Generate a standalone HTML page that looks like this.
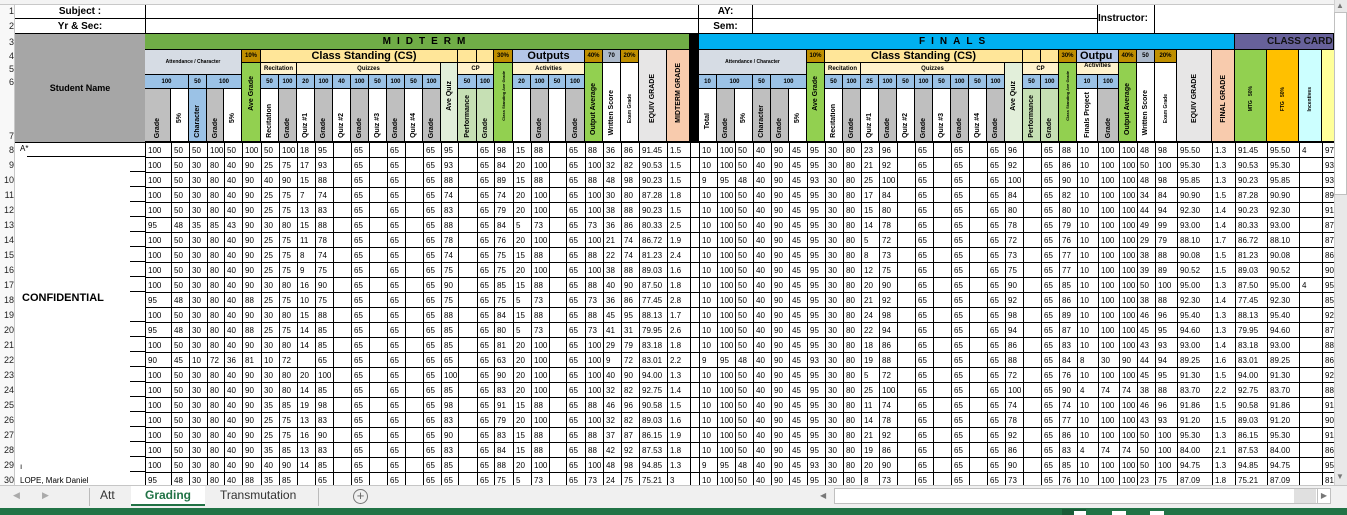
<!DOCTYPE html>
<html><head><meta charset="utf-8">
<style>
*{margin:0;padding:0;box-sizing:border-box}
body{width:1347px;height:515px;overflow:hidden;background:#fff;font-family:"Liberation Sans",Arial,sans-serif;position:relative;color:#000}
.a{position:absolute}
.h{position:absolute;border-right:1px solid #000;border-bottom:1px solid #000;display:flex;align-items:center;justify-content:center;font-weight:bold;font-size:6px;overflow:hidden;white-space:nowrap}
.h7{flex-direction:column;justify-content:flex-end;padding-bottom:3px}
.v{writing-mode:vertical-rl;transform:rotate(180deg);font-size:7px;font-weight:bold;white-space:nowrap}
.rn{position:absolute;left:0;width:14px;font-size:9px;text-align:right;color:#222;overflow:hidden}
#dt{position:absolute;left:145px;top:142px;width:1189px;height:343px;overflow:hidden}
table{border-collapse:collapse;table-layout:fixed;width:1200px}
td{border:1px solid #000;height:15px;padding:0 0 0 2px;font-size:8px;line-height:13px;white-space:nowrap;overflow:hidden}
</style></head><body>
<!-- column header strip -->
<div class="a" style="left:0;top:0;width:1334px;height:5px;background:#f3f3f3;border-bottom:1px solid #c8c8c8"></div>
<!-- row header -->
<div class="a" style="left:0;top:5px;width:15px;height:480px;background:#f8f8f8;border-right:1px solid #c8c8c8"></div>
<div class="rn" style="top:6px">1</div><div class="rn" style="top:21px">2</div><div class="rn" style="top:37px">3</div><div class="rn" style="top:51px">4</div><div class="rn" style="top:64px">5</div><div class="rn" style="top:77px">6</div><div class="rn" style="top:131px">7</div>
<div class="rn" style="top:145px">8</div><div class="rn" style="top:160px">9</div><div class="rn" style="top:175px">10</div><div class="rn" style="top:190px">11</div><div class="rn" style="top:205px">12</div><div class="rn" style="top:220px">13</div><div class="rn" style="top:235px">14</div><div class="rn" style="top:250px">15</div><div class="rn" style="top:265px">16</div><div class="rn" style="top:280px">17</div><div class="rn" style="top:295px">18</div><div class="rn" style="top:310px">19</div><div class="rn" style="top:325px">20</div><div class="rn" style="top:340px">21</div><div class="rn" style="top:355px">22</div><div class="rn" style="top:370px">23</div><div class="rn" style="top:385px">24</div><div class="rn" style="top:400px">25</div><div class="rn" style="top:415px">26</div><div class="rn" style="top:430px">27</div><div class="rn" style="top:445px">28</div><div class="rn" style="top:460px">29</div><div class="rn" style="top:475px">30</div>

<!-- rows 1-2 -->
<div class="a" style="left:15px;top:5px;width:130px;height:14px;font-size:10px;font-weight:bold;text-align:center;line-height:14px">Subject :</div>
<div class="a" style="left:15px;top:19px;width:130px;height:15px;font-size:10px;font-weight:bold;text-align:center;line-height:15px">Yr &amp; Sec:</div>
<div class="a" style="left:15px;top:18px;width:1083px;height:1px;background:#000"></div>
<div class="a" style="left:15px;top:33px;width:1319px;height:2px;background:#000"></div>
<div class="a" style="left:145px;top:5px;width:1px;height:29px;background:#000"></div>
<div class="a" style="left:698px;top:5px;width:1px;height:29px;background:#000"></div>
<div class="a" style="left:752px;top:5px;width:1px;height:29px;background:#000"></div>
<div class="a" style="left:1097px;top:5px;width:1px;height:29px;background:#000"></div>
<div class="a" style="left:1154px;top:5px;width:1px;height:29px;background:#000"></div>
<div class="a" style="left:699px;top:5px;width:53px;height:14px;font-size:10px;font-weight:bold;text-align:center;line-height:14px">AY:</div>
<div class="a" style="left:699px;top:19px;width:53px;height:15px;font-size:10px;font-weight:bold;text-align:center;line-height:15px">Sem:</div>
<div class="a" style="left:1098px;top:5px;width:60px;height:29px;font-size:10px;font-weight:bold;line-height:28px">Instructor:</div>

<!-- student name block -->
<div class="h" style="left:15px;top:34px;width:131px;height:109px;background:#a6a6a6;font-size:9px;border-left:0">Student Name</div>

<!-- row 3 bands -->
<div class="h" style="left:145px;top:34px;width:545px;height:16px;background:#70ad47;font-size:10px;letter-spacing:6px;justify-content:center;padding-left:20px">MIDTERM</div>
<div class="a" style="left:690px;top:34px;width:9px;height:108px;background:#000"></div>
<div class="h" style="left:699px;top:34px;width:536px;height:16px;background:#00b0f0;font-size:10px;letter-spacing:6px;justify-content:flex-start;padding-left:220px">FINALS</div>
<div class="h" style="left:1235px;top:34px;width:99px;height:16px;background:#67619a;font-size:10px;justify-content:flex-start;padding-left:32px;color:#111">CLASS CARD</div>

<!-- MIDTERM rows 4-5 -->
<div class="h" style="left:145px;top:50px;width:97px;height:25px;background:#d6dce4;font-size:5px">Attendance / Character</div>
<div class="h" style="left:242px;top:50px;width:19px;height:13px;background:#bf8f00">10%</div>
<div class="h" style="left:242px;top:63px;width:19px;height:79px;background:#92d050;flex-direction:column;justify-content:flex-end;padding-bottom:30px"><span class="v">Ave Grade</span></div>
<div class="h" style="left:261px;top:50px;width:197px;height:13px;background:#ffe699;font-size:11px;padding-left:10px">Class Standing (CS)</div>
<div class="h" style="left:458px;top:50px;width:19px;height:13px;background:#ffe699"></div>
<div class="h" style="left:477px;top:50px;width:17px;height:13px;background:#ffe699"></div>
<div class="h" style="left:494px;top:50px;width:19px;height:13px;background:#bf8f00">30%</div>
<div class="h" style="left:513px;top:50px;width:72px;height:13px;background:#b4c6e7;font-size:11px">Outputs</div>
<div class="h" style="left:585px;top:50px;width:18px;height:13px;background:#bf8f00">40%</div>
<div class="h" style="left:603px;top:50px;width:18px;height:13px;background:#acb9ca">70</div>
<div class="h" style="left:621px;top:50px;width:18px;height:13px;background:#bf8f00">20%</div>
<div class="h" style="left:639px;top:50px;width:28px;height:92px;background:#e7e6e6;flex-direction:column;justify-content:flex-end;padding-bottom:18px"><span class="v">EQUIV GRADE</span></div>
<div class="h" style="left:667px;top:50px;width:23px;height:92px;background:#f8cbad;flex-direction:column;justify-content:flex-end;padding-bottom:18px"><span class="v">MIDTERM GRADE</span></div>
<div class="h" style="left:261px;top:63px;width:36px;height:12px;background:#fff2cc">Recitation</div>
<div class="h" style="left:297px;top:63px;width:144px;height:12px;background:#fff2cc">Quizzes</div>
<div class="h" style="left:441px;top:63px;width:17px;height:79px;background:#e2efda;flex-direction:column;justify-content:flex-end;padding-bottom:30px"><span class="v">Ave Quiz</span></div>
<div class="h" style="left:458px;top:63px;width:36px;height:12px;background:#fff2cc">CP</div>
<div class="h" style="left:494px;top:63px;width:19px;height:79px;background:#92d050;flex-direction:column;justify-content:flex-end;padding-bottom:20px"><span class="v" style="font-size:4px">Class Standing Ave Grade</span></div>
<div class="h" style="left:513px;top:63px;width:72px;height:12px;background:#fff2cc">Activities</div>
<div class="h" style="left:585px;top:63px;width:18px;height:79px;background:#92d050;flex-direction:column;justify-content:flex-end;padding-bottom:6px"><span class="v">Output Average</span></div>
<div class="h" style="left:603px;top:63px;width:18px;height:79px;background:#fff;flex-direction:column;justify-content:flex-end;padding-bottom:6px"><span class="v">Written Score</span></div>
<div class="h" style="left:621px;top:63px;width:18px;height:79px;background:#fff;flex-direction:column;justify-content:flex-end;padding-bottom:18px"><span class="v" style="font-size:5px">Exam Grade</span></div>

<!-- MIDTERM row 6 -->
<div class="h" style="left:145px;top:75px;width:44px;height:14px;background:#9bc2e6">100</div>
<div class="h" style="left:189px;top:75px;width:18px;height:14px;background:#9bc2e6">50</div>
<div class="h" style="left:207px;top:75px;width:35px;height:14px;background:#9bc2e6">100</div>
<div class="h" style="left:261px;top:75px;width:18px;height:14px;background:#9bc2e6">50</div>
<div class="h" style="left:279px;top:75px;width:18px;height:14px;background:#9bc2e6">100</div>
<div class="h" style="left:297px;top:75px;width:18px;height:14px;background:#9bc2e6">20</div>
<div class="h" style="left:315px;top:75px;width:18px;height:14px;background:#9bc2e6">100</div>
<div class="h" style="left:333px;top:75px;width:18px;height:14px;background:#9bc2e6">40</div>
<div class="h" style="left:351px;top:75px;width:18px;height:14px;background:#9bc2e6">100</div>
<div class="h" style="left:369px;top:75px;width:18px;height:14px;background:#9bc2e6">50</div>
<div class="h" style="left:387px;top:75px;width:18px;height:14px;background:#9bc2e6">100</div>
<div class="h" style="left:405px;top:75px;width:18px;height:14px;background:#9bc2e6">50</div>
<div class="h" style="left:423px;top:75px;width:18px;height:14px;background:#9bc2e6">100</div>
<div class="h" style="left:458px;top:75px;width:19px;height:14px;background:#9bc2e6">50</div>
<div class="h" style="left:477px;top:75px;width:17px;height:14px;background:#9bc2e6">100</div>
<div class="h" style="left:513px;top:75px;width:18px;height:14px;background:#9bc2e6">20</div>
<div class="h" style="left:531px;top:75px;width:18px;height:14px;background:#9bc2e6">100</div>
<div class="h" style="left:549px;top:75px;width:17px;height:14px;background:#9bc2e6">50</div>
<div class="h" style="left:566px;top:75px;width:19px;height:14px;background:#9bc2e6">100</div>

<!-- MIDTERM row 7 -->
<div class="h h7" style="left:145px;top:89px;width:26px;height:53px;background:#bfbfbf"><span class="v">Grade</span></div>
<div class="h h7" style="left:171px;top:89px;width:18px;height:53px;background:#fff;padding-bottom:18px"><span class="v">5%</span></div>
<div class="h h7" style="left:189px;top:89px;width:18px;height:53px;background:#9bc2e6"><span class="v">Character</span></div>
<div class="h h7" style="left:207px;top:89px;width:17px;height:53px;background:#bfbfbf"><span class="v">Grade</span></div>
<div class="h h7" style="left:224px;top:89px;width:18px;height:53px;background:#fff;padding-bottom:18px"><span class="v">5%</span></div>
<div class="h h7" style="left:261px;top:89px;width:18px;height:53px;background:#fff"><span class="v">Recitation</span></div>
<div class="h h7" style="left:279px;top:89px;width:18px;height:53px;background:#bfbfbf"><span class="v">Grade</span></div>
<div class="h h7" style="left:297px;top:89px;width:18px;height:53px;background:#fff"><span class="v">Quiz #1</span></div>
<div class="h h7" style="left:315px;top:89px;width:18px;height:53px;background:#bfbfbf"><span class="v">Grade</span></div>
<div class="h h7" style="left:333px;top:89px;width:18px;height:53px;background:#fff"><span class="v">Quiz #2</span></div>
<div class="h h7" style="left:351px;top:89px;width:18px;height:53px;background:#bfbfbf"><span class="v">Grade</span></div>
<div class="h h7" style="left:369px;top:89px;width:18px;height:53px;background:#fff"><span class="v">Quiz #3</span></div>
<div class="h h7" style="left:387px;top:89px;width:18px;height:53px;background:#bfbfbf"><span class="v">Grade</span></div>
<div class="h h7" style="left:405px;top:89px;width:18px;height:53px;background:#fff"><span class="v">Quiz #4</span></div>
<div class="h h7" style="left:423px;top:89px;width:18px;height:53px;background:#bfbfbf"><span class="v">Grade</span></div>
<div class="h h7" style="left:458px;top:89px;width:19px;height:53px;background:#c6e0b4"><span class="v">Performance</span></div>
<div class="h h7" style="left:477px;top:89px;width:17px;height:53px;background:#c6e0b4"><span class="v">Grade</span></div>
<div class="h h7" style="left:513px;top:89px;width:18px;height:53px;background:#fff"></div>
<div class="h h7" style="left:531px;top:89px;width:18px;height:53px;background:#bfbfbf"><span class="v">Grade</span></div>
<div class="h h7" style="left:549px;top:89px;width:17px;height:53px;background:#fff"></div>
<div class="h h7" style="left:566px;top:89px;width:19px;height:53px;background:#bfbfbf"><span class="v">Grade</span></div>

<!-- FINALS rows 4-5 -->
<div class="h" style="left:699px;top:50px;width:108px;height:25px;background:#d6dce4;font-size:5px">Attendance / Character</div>
<div class="h" style="left:807px;top:50px;width:18px;height:13px;background:#bf8f00">10%</div>
<div class="h" style="left:807px;top:63px;width:18px;height:79px;background:#92d050;flex-direction:column;justify-content:flex-end;padding-bottom:30px"><span class="v">Ave Grade</span></div>
<div class="h" style="left:825px;top:50px;width:198px;height:13px;background:#ffe699;font-size:11px">Class Standing (CS)</div>
<div class="h" style="left:1023px;top:50px;width:18px;height:13px;background:#ffe699"></div>
<div class="h" style="left:1041px;top:50px;width:18px;height:13px;background:#ffe699"></div>
<div class="h" style="left:1059px;top:50px;width:18px;height:13px;background:#bf8f00">30%</div>
<div class="h" style="left:1077px;top:50px;width:42px;height:13px;background:#b4c6e7;font-size:11px;justify-content:flex-start;padding-left:3px">Outpu</div>
<div class="h" style="left:1119px;top:50px;width:18px;height:13px;background:#bf8f00">40%</div>
<div class="h" style="left:1137px;top:50px;width:18px;height:13px;background:#acb9ca">50</div>
<div class="h" style="left:1155px;top:50px;width:22px;height:13px;background:#bf8f00">20%</div>
<div class="h" style="left:1177px;top:50px;width:35px;height:92px;background:#e7e6e6;flex-direction:column;justify-content:flex-end;padding-bottom:18px"><span class="v">EQUIV GRADE</span></div>
<div class="h" style="left:1212px;top:50px;width:23px;height:92px;background:#f8cbad;flex-direction:column;justify-content:flex-end;padding-bottom:18px"><span class="v">FINAL GRADE</span></div>
<div class="h" style="left:1235px;top:50px;width:32px;height:92px;background:#92d050;flex-direction:column;justify-content:flex-end;padding-bottom:30px"><span class="v" style="font-size:5px">MTG &nbsp; 50%</span></div>
<div class="h" style="left:1267px;top:50px;width:32px;height:92px;background:#ffc000;flex-direction:column;justify-content:flex-end;padding-bottom:30px"><span class="v" style="font-size:5px">FTG &nbsp; 50%</span></div>
<div class="h" style="left:1299px;top:50px;width:23px;height:92px;background:#ccffff;flex-direction:column;justify-content:flex-end;padding-bottom:30px"><span class="v" style="font-size:5px">Incentives</span></div>
<div class="h" style="left:1322px;top:50px;width:14px;height:92px;background:#ffff99"></div>
<div class="h" style="left:825px;top:63px;width:36px;height:12px;background:#fff2cc">Recitation</div>
<div class="h" style="left:861px;top:63px;width:144px;height:12px;background:#fff2cc">Quizzes</div>
<div class="h" style="left:1005px;top:63px;width:18px;height:79px;background:#e2efda;flex-direction:column;justify-content:flex-end;padding-bottom:30px"><span class="v">Ave Quiz</span></div>
<div class="h" style="left:1023px;top:63px;width:36px;height:12px;background:#fff2cc">CP</div>
<div class="h" style="left:1059px;top:63px;width:18px;height:79px;background:#92d050;flex-direction:column;justify-content:flex-end;padding-bottom:20px"><span class="v" style="font-size:4px">Class Standing Ave Grade</span></div>
<div class="h" style="left:1077px;top:63px;width:42px;height:12px;background:#fff2cc;align-items:flex-start">Activities</div>
<div class="h" style="left:1119px;top:63px;width:18px;height:79px;background:#92d050;flex-direction:column;justify-content:flex-end;padding-bottom:6px"><span class="v">Output Average</span></div>
<div class="h" style="left:1137px;top:63px;width:18px;height:79px;background:#fff;flex-direction:column;justify-content:flex-end;padding-bottom:6px"><span class="v">Written Score</span></div>
<div class="h" style="left:1155px;top:63px;width:22px;height:79px;background:#fff;flex-direction:column;justify-content:flex-end;padding-bottom:18px"><span class="v" style="font-size:5px">Exam Grade</span></div>

<!-- FINALS row 6 -->
<div class="h" style="left:699px;top:75px;width:18px;height:14px;background:#9bc2e6">10</div>
<div class="h" style="left:717px;top:75px;width:36px;height:14px;background:#9bc2e6">100</div>
<div class="h" style="left:753px;top:75px;width:18px;height:14px;background:#9bc2e6">50</div>
<div class="h" style="left:771px;top:75px;width:36px;height:14px;background:#9bc2e6">100</div>
<div class="h" style="left:825px;top:75px;width:18px;height:14px;background:#9bc2e6">50</div>
<div class="h" style="left:843px;top:75px;width:18px;height:14px;background:#9bc2e6">100</div>
<div class="h" style="left:861px;top:75px;width:18px;height:14px;background:#9bc2e6">25</div>
<div class="h" style="left:879px;top:75px;width:18px;height:14px;background:#9bc2e6">100</div>
<div class="h" style="left:897px;top:75px;width:18px;height:14px;background:#9bc2e6">50</div>
<div class="h" style="left:915px;top:75px;width:18px;height:14px;background:#9bc2e6">100</div>
<div class="h" style="left:933px;top:75px;width:18px;height:14px;background:#9bc2e6">50</div>
<div class="h" style="left:951px;top:75px;width:18px;height:14px;background:#9bc2e6">100</div>
<div class="h" style="left:969px;top:75px;width:18px;height:14px;background:#9bc2e6">50</div>
<div class="h" style="left:987px;top:75px;width:18px;height:14px;background:#9bc2e6">100</div>
<div class="h" style="left:1023px;top:75px;width:18px;height:14px;background:#9bc2e6">50</div>
<div class="h" style="left:1041px;top:75px;width:18px;height:14px;background:#9bc2e6">100</div>
<div class="h" style="left:1077px;top:75px;width:21px;height:14px;background:#9bc2e6">10</div>
<div class="h" style="left:1098px;top:75px;width:21px;height:14px;background:#9bc2e6">100</div>

<!-- FINALS row 7 -->
<div class="h h7" style="left:699px;top:89px;width:18px;height:53px;background:#fff;padding-bottom:12px"><span class="v">Total</span></div>
<div class="h h7" style="left:717px;top:89px;width:18px;height:53px;background:#bfbfbf"><span class="v">Grade</span></div>
<div class="h h7" style="left:735px;top:89px;width:18px;height:53px;background:#fff;padding-bottom:18px"><span class="v">5%</span></div>
<div class="h h7" style="left:753px;top:89px;width:18px;height:53px;background:#bfbfbf"><span class="v">Character</span></div>
<div class="h h7" style="left:771px;top:89px;width:18px;height:53px;background:#bfbfbf"><span class="v">Grade</span></div>
<div class="h h7" style="left:789px;top:89px;width:18px;height:53px;background:#fff;padding-bottom:18px"><span class="v">5%</span></div>
<div class="h h7" style="left:825px;top:89px;width:18px;height:53px;background:#fff"><span class="v">Recitation</span></div>
<div class="h h7" style="left:843px;top:89px;width:18px;height:53px;background:#bfbfbf"><span class="v">Grade</span></div>
<div class="h h7" style="left:861px;top:89px;width:18px;height:53px;background:#fff"><span class="v">Quiz #1</span></div>
<div class="h h7" style="left:879px;top:89px;width:18px;height:53px;background:#bfbfbf"><span class="v">Grade</span></div>
<div class="h h7" style="left:897px;top:89px;width:18px;height:53px;background:#fff"><span class="v">Quiz #2</span></div>
<div class="h h7" style="left:915px;top:89px;width:18px;height:53px;background:#bfbfbf"><span class="v">Grade</span></div>
<div class="h h7" style="left:933px;top:89px;width:18px;height:53px;background:#fff"><span class="v">Quiz #3</span></div>
<div class="h h7" style="left:951px;top:89px;width:18px;height:53px;background:#bfbfbf"><span class="v">Grade</span></div>
<div class="h h7" style="left:969px;top:89px;width:18px;height:53px;background:#fff"><span class="v">Quiz #4</span></div>
<div class="h h7" style="left:987px;top:89px;width:18px;height:53px;background:#bfbfbf"><span class="v">Grade</span></div>
<div class="h h7" style="left:1023px;top:89px;width:18px;height:53px;background:#c6e0b4"><span class="v">Performance</span></div>
<div class="h h7" style="left:1041px;top:89px;width:18px;height:53px;background:#c6e0b4"><span class="v">Grade</span></div>
<div class="h h7" style="left:1077px;top:89px;width:21px;height:53px;background:#fff"><span class="v">Finals Project</span></div>
<div class="h h7" style="left:1098px;top:89px;width:21px;height:53px;background:#bfbfbf"><span class="v">Grade</span></div>

<!-- name column -->
<div class="a" style="left:20px;top:144px;font-size:8px">A*</div>
<div class="a" style="left:22px;top:292px;font-size:11px;font-weight:bold">CONFIDENTIAL</div>
<div class="a" style="left:20px;top:462px;font-size:8px">ı</div>
<div class="a" style="left:20px;top:476px;font-size:8px">LOPE, Mark Daniel</div>
<div class="a" style="left:27px;top:156px;width:118px;height:1px;background:#000"></div>
<div class="a" style="left:130px;top:171px;width:15px;height:1px;background:#000"></div>
<div class="a" style="left:130px;top:186px;width:15px;height:1px;background:#000"></div>
<div class="a" style="left:130px;top:201px;width:15px;height:1px;background:#000"></div>
<div class="a" style="left:130px;top:216px;width:15px;height:1px;background:#000"></div>
<div class="a" style="left:130px;top:231px;width:15px;height:1px;background:#000"></div>
<div class="a" style="left:130px;top:246px;width:15px;height:1px;background:#000"></div>
<div class="a" style="left:130px;top:261px;width:15px;height:1px;background:#000"></div>
<div class="a" style="left:130px;top:276px;width:15px;height:1px;background:#000"></div>
<div class="a" style="left:130px;top:291px;width:15px;height:1px;background:#000"></div>
<div class="a" style="left:130px;top:321px;width:15px;height:1px;background:#000"></div>
<div class="a" style="left:130px;top:336px;width:15px;height:1px;background:#000"></div>
<div class="a" style="left:130px;top:351px;width:15px;height:1px;background:#000"></div>
<div class="a" style="left:130px;top:366px;width:15px;height:1px;background:#000"></div>
<div class="a" style="left:130px;top:381px;width:15px;height:1px;background:#000"></div>
<div class="a" style="left:130px;top:396px;width:15px;height:1px;background:#000"></div>
<div class="a" style="left:130px;top:411px;width:15px;height:1px;background:#000"></div>
<div class="a" style="left:130px;top:426px;width:15px;height:1px;background:#000"></div>
<div class="a" style="left:130px;top:441px;width:15px;height:1px;background:#000"></div>
<div class="a" style="left:130px;top:456px;width:15px;height:1px;background:#000"></div>
<div class="a" style="left:130px;top:471px;width:15px;height:1px;background:#000"></div>

<div id="dt"><table>
<colgroup><col style="width:26px"><col style="width:18px"><col style="width:18px"><col style="width:17px"><col style="width:18px"><col style="width:19px"><col style="width:18px"><col style="width:18px"><col style="width:18px"><col style="width:18px"><col style="width:18px"><col style="width:18px"><col style="width:18px"><col style="width:18px"><col style="width:18px"><col style="width:18px"><col style="width:17px"><col style="width:19px"><col style="width:17px"><col style="width:19px"><col style="width:18px"><col style="width:18px"><col style="width:17px"><col style="width:19px"><col style="width:18px"><col style="width:18px"><col style="width:18px"><col style="width:28px"><col style="width:23px"><col style="width:9px"><col style="width:18px"><col style="width:18px"><col style="width:18px"><col style="width:18px"><col style="width:18px"><col style="width:18px"><col style="width:18px"><col style="width:18px"><col style="width:18px"><col style="width:18px"><col style="width:18px"><col style="width:18px"><col style="width:18px"><col style="width:18px"><col style="width:18px"><col style="width:18px"><col style="width:18px"><col style="width:18px"><col style="width:18px"><col style="width:18px"><col style="width:18px"><col style="width:21px"><col style="width:21px"><col style="width:18px"><col style="width:18px"><col style="width:22px"><col style="width:35px"><col style="width:23px"><col style="width:32px"><col style="width:32px"><col style="width:23px"><col style="width:23px"></colgroup>
<tr><td>100<td>50<td>50<td>100<td>50<td>100<td>50<td>100<td>18<td>95<td><td>65<td><td>65<td><td>65<td>95<td><td>65<td>98<td>15<td>88<td><td>65<td>88<td>36<td>86<td>91.45<td>1.5<td><td>10<td>100<td>50<td>40<td>90<td>45<td>95<td>30<td>80<td>23<td>96<td><td>65<td><td>65<td><td>65<td>96<td><td>65<td>88<td>10<td>100<td>100<td>48<td>98<td>95.50<td>1.3<td>91.45<td>95.50<td>4<td>97
<tr><td>100<td>50<td>30<td>80<td>40<td>90<td>25<td>75<td>17<td>93<td><td>65<td><td>65<td><td>65<td>93<td><td>65<td>84<td>20<td>100<td><td>65<td>100<td>32<td>82<td>90.53<td>1.5<td><td>10<td>100<td>50<td>40<td>90<td>45<td>95<td>30<td>80<td>21<td>92<td><td>65<td><td>65<td><td>65<td>92<td><td>65<td>86<td>10<td>100<td>100<td>50<td>100<td>95.30<td>1.3<td>90.53<td>95.30<td><td>93
<tr><td>100<td>50<td>30<td>80<td>40<td>90<td>40<td>90<td>15<td>88<td><td>65<td><td>65<td><td>65<td>88<td><td>65<td>89<td>15<td>88<td><td>65<td>88<td>48<td>98<td>90.23<td>1.5<td><td>9<td>95<td>48<td>40<td>90<td>45<td>93<td>30<td>80<td>25<td>100<td><td>65<td><td>65<td><td>65<td>100<td><td>65<td>90<td>10<td>100<td>100<td>48<td>98<td>95.85<td>1.3<td>90.23<td>95.85<td><td>93
<tr><td>100<td>50<td>30<td>80<td>40<td>90<td>25<td>75<td>7<td>74<td><td>65<td><td>65<td><td>65<td>74<td><td>65<td>74<td>20<td>100<td><td>65<td>100<td>30<td>80<td>87.28<td>1.8<td><td>10<td>100<td>50<td>40<td>90<td>45<td>95<td>30<td>80<td>17<td>84<td><td>65<td><td>65<td><td>65<td>84<td><td>65<td>82<td>10<td>100<td>100<td>34<td>84<td>90.90<td>1.5<td>87.28<td>90.90<td><td>89
<tr><td>100<td>50<td>30<td>80<td>40<td>90<td>25<td>75<td>13<td>83<td><td>65<td><td>65<td><td>65<td>83<td><td>65<td>79<td>20<td>100<td><td>65<td>100<td>38<td>88<td>90.23<td>1.5<td><td>10<td>100<td>50<td>40<td>90<td>45<td>95<td>30<td>80<td>15<td>80<td><td>65<td><td>65<td><td>65<td>80<td><td>65<td>80<td>10<td>100<td>100<td>44<td>94<td>92.30<td>1.4<td>90.23<td>92.30<td><td>91
<tr><td>95<td>48<td>35<td>85<td>43<td>90<td>30<td>80<td>15<td>88<td><td>65<td><td>65<td><td>65<td>88<td><td>65<td>84<td>5<td>73<td><td>65<td>73<td>36<td>86<td>80.33<td>2.5<td><td>10<td>100<td>50<td>40<td>90<td>45<td>95<td>30<td>80<td>14<td>78<td><td>65<td><td>65<td><td>65<td>78<td><td>65<td>79<td>10<td>100<td>100<td>49<td>99<td>93.00<td>1.4<td>80.33<td>93.00<td><td>87
<tr><td>100<td>50<td>30<td>80<td>40<td>90<td>25<td>75<td>11<td>78<td><td>65<td><td>65<td><td>65<td>78<td><td>65<td>76<td>20<td>100<td><td>65<td>100<td>21<td>74<td>86.72<td>1.9<td><td>10<td>100<td>50<td>40<td>90<td>45<td>95<td>30<td>80<td>5<td>72<td><td>65<td><td>65<td><td>65<td>72<td><td>65<td>76<td>10<td>100<td>100<td>29<td>79<td>88.10<td>1.7<td>86.72<td>88.10<td><td>87
<tr><td>100<td>50<td>30<td>80<td>40<td>90<td>25<td>75<td>8<td>74<td><td>65<td><td>65<td><td>65<td>74<td><td>65<td>75<td>15<td>88<td><td>65<td>88<td>22<td>74<td>81.23<td>2.4<td><td>10<td>100<td>50<td>40<td>90<td>45<td>95<td>30<td>80<td>8<td>73<td><td>65<td><td>65<td><td>65<td>73<td><td>65<td>77<td>10<td>100<td>100<td>38<td>88<td>90.08<td>1.5<td>81.23<td>90.08<td><td>86
<tr><td>100<td>50<td>30<td>80<td>40<td>90<td>25<td>75<td>9<td>75<td><td>65<td><td>65<td><td>65<td>75<td><td>65<td>75<td>20<td>100<td><td>65<td>100<td>38<td>88<td>89.03<td>1.6<td><td>10<td>100<td>50<td>40<td>90<td>45<td>95<td>30<td>80<td>12<td>75<td><td>65<td><td>65<td><td>65<td>75<td><td>65<td>77<td>10<td>100<td>100<td>39<td>89<td>90.52<td>1.5<td>89.03<td>90.52<td><td>90
<tr><td>100<td>50<td>30<td>80<td>40<td>90<td>30<td>80<td>16<td>90<td><td>65<td><td>65<td><td>65<td>90<td><td>65<td>85<td>15<td>88<td><td>65<td>88<td>40<td>90<td>87.50<td>1.8<td><td>10<td>100<td>50<td>40<td>90<td>45<td>95<td>30<td>80<td>20<td>90<td><td>65<td><td>65<td><td>65<td>90<td><td>65<td>85<td>10<td>100<td>100<td>50<td>100<td>95.00<td>1.3<td>87.50<td>95.00<td>4<td>95
<tr><td>95<td>48<td>30<td>80<td>40<td>88<td>25<td>75<td>10<td>75<td><td>65<td><td>65<td><td>65<td>75<td><td>65<td>75<td>5<td>73<td><td>65<td>73<td>36<td>86<td>77.45<td>2.8<td><td>10<td>100<td>50<td>40<td>90<td>45<td>95<td>30<td>80<td>21<td>92<td><td>65<td><td>65<td><td>65<td>92<td><td>65<td>86<td>10<td>100<td>100<td>38<td>88<td>92.30<td>1.4<td>77.45<td>92.30<td><td>85
<tr><td>100<td>50<td>30<td>80<td>40<td>90<td>30<td>80<td>15<td>88<td><td>65<td><td>65<td><td>65<td>88<td><td>65<td>84<td>15<td>88<td><td>65<td>88<td>45<td>95<td>88.13<td>1.7<td><td>10<td>100<td>50<td>40<td>90<td>45<td>95<td>30<td>80<td>24<td>98<td><td>65<td><td>65<td><td>65<td>98<td><td>65<td>89<td>10<td>100<td>100<td>46<td>96<td>95.40<td>1.3<td>88.13<td>95.40<td><td>92
<tr><td>95<td>48<td>30<td>80<td>40<td>88<td>25<td>75<td>14<td>85<td><td>65<td><td>65<td><td>65<td>85<td><td>65<td>80<td>5<td>73<td><td>65<td>73<td>41<td>31<td>79.95<td>2.6<td><td>10<td>100<td>50<td>40<td>90<td>45<td>95<td>30<td>80<td>22<td>94<td><td>65<td><td>65<td><td>65<td>94<td><td>65<td>87<td>10<td>100<td>100<td>45<td>95<td>94.60<td>1.3<td>79.95<td>94.60<td><td>87
<tr><td>100<td>50<td>30<td>80<td>40<td>90<td>30<td>80<td>14<td>85<td><td>65<td><td>65<td><td>65<td>85<td><td>65<td>81<td>20<td>100<td><td>65<td>100<td>29<td>79<td>83.18<td>1.8<td><td>10<td>100<td>50<td>40<td>90<td>45<td>95<td>30<td>80<td>18<td>86<td><td>65<td><td>65<td><td>65<td>86<td><td>65<td>83<td>10<td>100<td>100<td>43<td>93<td>93.00<td>1.4<td>83.18<td>93.00<td><td>88
<tr><td>90<td>45<td>10<td>72<td>36<td>81<td>10<td>72<td><td>65<td><td>65<td><td>65<td><td>65<td>65<td><td>65<td>63<td>20<td>100<td><td>65<td>100<td>9<td>72<td>83.01<td>2.2<td><td>9<td>95<td>48<td>40<td>90<td>45<td>93<td>30<td>80<td>19<td>88<td><td>65<td><td>65<td><td>65<td>88<td><td>65<td>84<td>8<td>30<td>90<td>44<td>94<td>89.25<td>1.6<td>83.01<td>89.25<td><td>86
<tr><td>100<td>50<td>30<td>80<td>40<td>90<td>30<td>80<td>20<td>100<td><td>65<td><td>65<td><td>65<td>100<td><td>65<td>90<td>20<td>100<td><td>65<td>100<td>40<td>90<td>94.00<td>1.3<td><td>10<td>100<td>50<td>40<td>90<td>45<td>95<td>30<td>80<td>5<td>72<td><td>65<td><td>65<td><td>65<td>72<td><td>65<td>76<td>10<td>100<td>100<td>45<td>95<td>91.30<td>1.5<td>94.00<td>91.30<td><td>92
<tr><td>100<td>50<td>30<td>80<td>40<td>90<td>30<td>80<td>14<td>85<td><td>65<td><td>65<td><td>65<td>85<td><td>65<td>83<td>20<td>100<td><td>65<td>100<td>32<td>82<td>92.75<td>1.4<td><td>10<td>100<td>50<td>40<td>90<td>45<td>95<td>30<td>80<td>25<td>100<td><td>65<td><td>65<td><td>65<td>100<td><td>65<td>90<td>4<td>74<td>74<td>38<td>88<td>83.70<td>2.2<td>92.75<td>83.70<td><td>88
<tr><td>100<td>50<td>30<td>80<td>40<td>90<td>35<td>85<td>19<td>98<td><td>65<td><td>65<td><td>65<td>98<td><td>65<td>91<td>15<td>88<td><td>65<td>88<td>46<td>96<td>90.58<td>1.5<td><td>10<td>100<td>50<td>40<td>90<td>45<td>95<td>30<td>80<td>11<td>74<td><td>65<td><td>65<td><td>65<td>74<td><td>65<td>74<td>10<td>100<td>100<td>46<td>96<td>91.86<td>1.5<td>90.58<td>91.86<td><td>91
<tr><td>100<td>50<td>30<td>80<td>40<td>90<td>25<td>75<td>13<td>83<td><td>65<td><td>65<td><td>65<td>83<td><td>65<td>79<td>20<td>100<td><td>65<td>100<td>32<td>82<td>89.03<td>1.6<td><td>10<td>100<td>50<td>40<td>90<td>45<td>95<td>30<td>80<td>14<td>78<td><td>65<td><td>65<td><td>65<td>78<td><td>65<td>77<td>10<td>100<td>100<td>43<td>93<td>91.20<td>1.5<td>89.03<td>91.20<td><td>90
<tr><td>100<td>50<td>30<td>80<td>40<td>90<td>25<td>75<td>16<td>90<td><td>65<td><td>65<td><td>65<td>90<td><td>65<td>83<td>15<td>88<td><td>65<td>88<td>37<td>87<td>86.15<td>1.9<td><td>10<td>100<td>50<td>40<td>90<td>45<td>95<td>30<td>80<td>21<td>92<td><td>65<td><td>65<td><td>65<td>92<td><td>65<td>86<td>10<td>100<td>100<td>50<td>100<td>95.30<td>1.3<td>86.15<td>95.30<td><td>91
<tr><td>100<td>50<td>30<td>80<td>40<td>90<td>35<td>85<td>13<td>83<td><td>65<td><td>65<td><td>65<td>83<td><td>65<td>84<td>15<td>88<td><td>65<td>88<td>42<td>92<td>87.53<td>1.8<td><td>10<td>100<td>50<td>40<td>90<td>45<td>95<td>30<td>80<td>19<td>86<td><td>65<td><td>65<td><td>65<td>86<td><td>65<td>83<td>4<td>74<td>74<td>50<td>100<td>84.00<td>2.1<td>87.53<td>84.00<td><td>86
<tr><td>100<td>50<td>30<td>80<td>40<td>90<td>40<td>90<td>14<td>85<td><td>65<td><td>65<td><td>65<td>85<td><td>65<td>88<td>20<td>100<td><td>65<td>100<td>48<td>98<td>94.85<td>1.3<td><td>9<td>95<td>48<td>40<td>90<td>45<td>93<td>30<td>80<td>20<td>90<td><td>65<td><td>65<td><td>65<td>90<td><td>65<td>85<td>10<td>100<td>100<td>50<td>100<td>94.75<td>1.3<td>94.85<td>94.75<td><td>95
<tr><td>95<td>48<td>30<td>80<td>40<td>88<td>35<td>85<td><td>65<td><td>65<td><td>65<td><td>65<td>65<td><td>65<td>75<td>5<td>73<td><td>65<td>73<td>24<td>75<td>75.21<td>3<td><td>10<td>100<td>50<td>40<td>90<td>45<td>95<td>30<td>80<td>8<td>73<td><td>65<td><td>65<td><td>65<td>73<td><td>65<td>76<td>10<td>100<td>100<td>23<td>75<td>87.09<td>1.8<td>75.21<td>87.09<td><td>81
</table></div>

<!-- vertical scrollbar -->
<div class="a" style="left:1334px;top:0;width:13px;height:485px;background:#e9e9e9;border-left:1px solid #d0d0d0"></div>
<div class="a" style="left:1334px;top:12px;width:13px;height:183px;background:#fff;border:1px solid #c0c0c0"></div>
<div class="a" style="left:1336px;top:1px;font-size:8px;color:#777">▲</div>
<div class="a" style="left:1336px;top:472px;font-size:8px;color:#777">▼</div>

<!-- tab bar -->
<div class="a" style="left:0;top:485px;width:1347px;height:23px;background:#f0f0f0;border-top:1px solid #c6c6c6"></div>
<div class="a" style="left:13px;top:490px;font-size:9px;color:#aaa">◀</div>
<div class="a" style="left:42px;top:490px;font-size:9px;color:#aaa">▶</div>
<div class="a" style="left:89px;top:488px;width:1px;height:18px;background:#bbb"></div>
<div class="a" style="left:100px;top:488px;font-size:12px;color:#333">Att</div>
<div class="a" style="left:131px;top:486px;width:74px;height:20px;background:#fff;border-bottom:2px solid #217346;font-size:12px;font-weight:bold;color:#217346;text-align:center;line-height:18px">Grading</div>
<div class="a" style="left:220px;top:488px;font-size:12px;color:#333">Transmutation</div>
<div class="a" style="left:318px;top:488px;width:1px;height:18px;background:#bbb"></div>
<div class="a" style="left:353px;top:489px;width:15px;height:15px;border:1px solid #777;border-radius:50%;font-size:13px;color:#666;text-align:center;line-height:12px">+</div>
<div class="a" style="left:820px;top:488px;width:10px;height:15px;font-size:8px;color:#777;line-height:15px">◀</div>
<div class="a" style="left:834px;top:488px;width:497px;height:16px;background:#fff;border:1px solid #c0c0c0"></div>
<div class="a" style="left:1294px;top:489px;width:22px;height:14px;background:#e0e0e0"></div>
<div class="a" style="left:1317px;top:488px;width:14px;height:16px;border:1px solid #c0c0c0;background:#fff;font-size:8px;color:#777;text-align:center;line-height:14px">▶</div>
<!-- status bar -->
<div class="a" style="left:0;top:508px;width:1347px;height:7px;background:#217346"></div>
<div class="a" style="left:1062px;top:509px;width:24px;height:6px;background:#1a5c38"></div>
<div class="a" style="left:1074px;top:511px;width:12px;height:4px;background:#fff"></div>
<div class="a" style="left:1112px;top:511px;width:14px;height:4px;background:#fff"></div>
<div class="a" style="left:1150px;top:511px;width:14px;height:4px;background:#fff"></div>
</body></html>
